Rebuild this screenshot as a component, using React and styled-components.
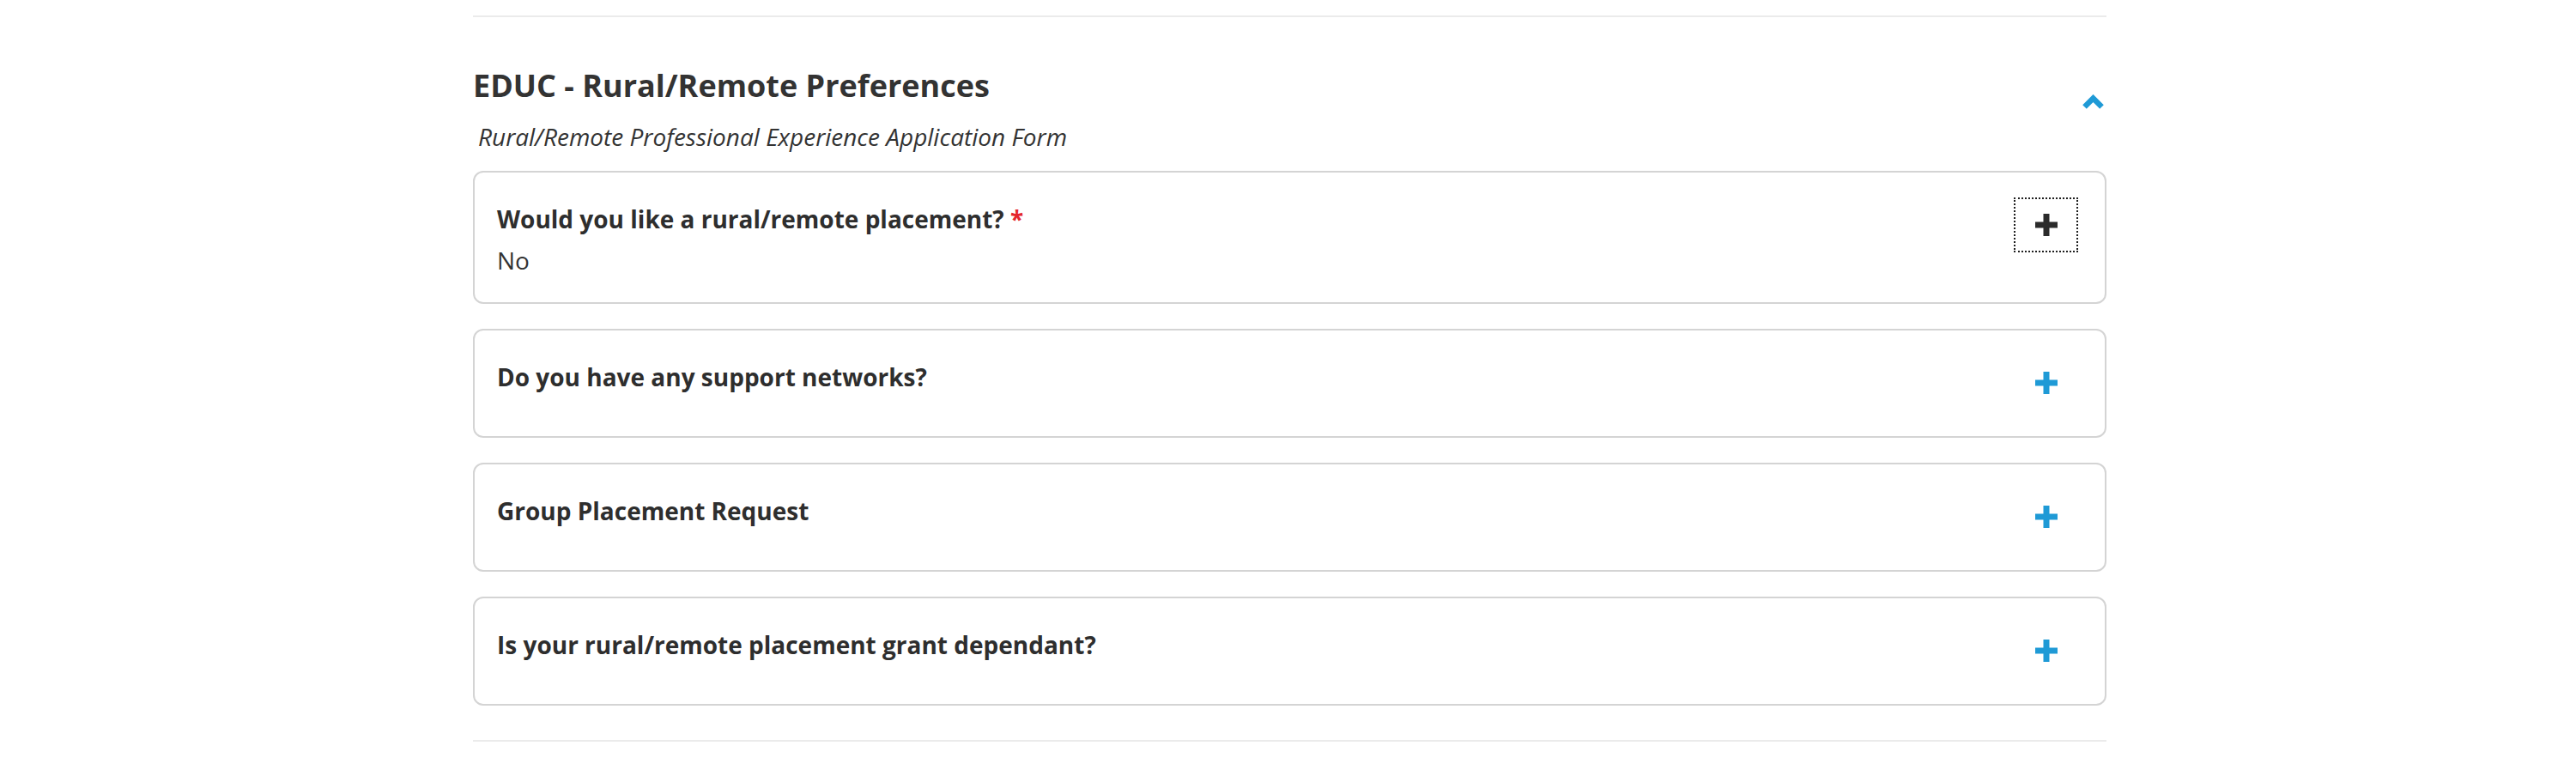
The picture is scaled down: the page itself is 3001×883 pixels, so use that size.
import styled, { createGlobalStyle } from "styled-components";

const GlobalStyle = createGlobalStyle`
  html, body {
    margin: 0;
    padding: 0;
    background: #fff;
  }
  body {
    font-family: "Open Sans", "Noto Sans", "Liberation Sans", sans-serif;
    color: #333;
  }
`;

const Page = styled.div`
  display: flex;
  justify-content: center;
  padding: 18px 0 0 4px;
`;

const Section = styled.section`
  width: 1903px;
  border-top: 2px solid #ebebeb;
  border-bottom: 2px solid #ebebeb;
  padding: 58px 0 40px;
`;

const Header = styled.div`
  display: flex;
  justify-content: space-between;
  align-items: flex-start;
`;

const Title = styled.h2`
  margin: 0;
  font-size: 36px;
  line-height: 43px;
  font-weight: 700;
  color: #333;
`;

const Subtitle = styled.p`
  margin: 20px 0 0 6px;
  font-size: 28px;
  line-height: 36px;
  font-style: italic;
  color: #333;
`;

const Toggle = styled.button`
  margin: 32px 3px 0 0;
  padding: 0;
  border: 0;
  background: none;
  display: flex;
  cursor: pointer;
`;

const List = styled.div`
  display: flex;
  flex-direction: column;
  gap: 29px;
  margin-top: 22px;
`;

const Card = styled.div`
  display: flex;
  justify-content: space-between;
  align-items: flex-start;
  border: 2px solid #d4d4d4;
  border-radius: 12px;
  padding: 29px 31px 30px 26px;
  background: #fff;
`;

const Body = styled.div`
  display: flex;
  flex-direction: column;
`;

const Question = styled.div`
  margin-top: 5px;
  font-size: 28px;
  line-height: 40px;
  font-weight: 700;
  color: #2e2e2e;
`;

const Required = styled.span`
  color: #e4262b;
`;

const Answer = styled.div`
  margin-top: 10px;
  font-size: 28px;
  line-height: 37px;
  color: #333;
`;

const Expand = styled.button`
  width: 75px;
  height: 64px;
  flex: none;
  display: flex;
  align-items: center;
  justify-content: center;
  padding: 0;
  background: none;
  border: 2px dotted ${(p) => (p.$focused ? "#1f1f1f" : "transparent")};
  color: ${(p) => (p.$focused ? "#2b2b2b" : "#1f9ad6")};
  cursor: pointer;
`;

function Plus() {
  return (
    <svg width="26" height="26" viewBox="0 0 26 26" fill="currentColor">
      <rect x="9.5" y="0" width="7" height="26" />
      <rect x="0" y="9.5" width="26" height="7" />
    </svg>
  );
}

function ChevronUp() {
  return (
    <svg width="25" height="17" viewBox="0 0 25 17">
      <polyline
        points="2.5,14.5 12.5,4.5 22.5,14.5"
        fill="none"
        stroke="#1f9ad6"
        strokeWidth="6.5"
      />
    </svg>
  );
}

const questions = [
  { label: "Would you like a rural/remote placement?", required: true, answer: "No", focused: true },
  { label: "Do you have any support networks?" },
  { label: "Group Placement Request" },
  { label: "Is your rural/remote placement grant dependant?" },
];

export default function App() {
  return (
    <>
      <GlobalStyle />
      <Page>
        <Section>
          <Header>
            <div>
              <Title>EDUC - Rural/Remote Preferences</Title>
              <Subtitle>Rural/Remote Professional Experience Application Form</Subtitle>
            </div>
            <Toggle aria-label="Collapse">
              <ChevronUp />
            </Toggle>
          </Header>
          <List>
            {questions.map((q) => (
              <Card key={q.label}>
                <Body>
                  <Question>
                    {q.label}
                    {q.required && <Required> *</Required>}
                  </Question>
                  {q.answer && <Answer>{q.answer}</Answer>}
                </Body>
                <Expand $focused={q.focused} aria-label="Expand">
                  <Plus />
                </Expand>
              </Card>
            ))}
          </List>
        </Section>
      </Page>
    </>
  );
}
